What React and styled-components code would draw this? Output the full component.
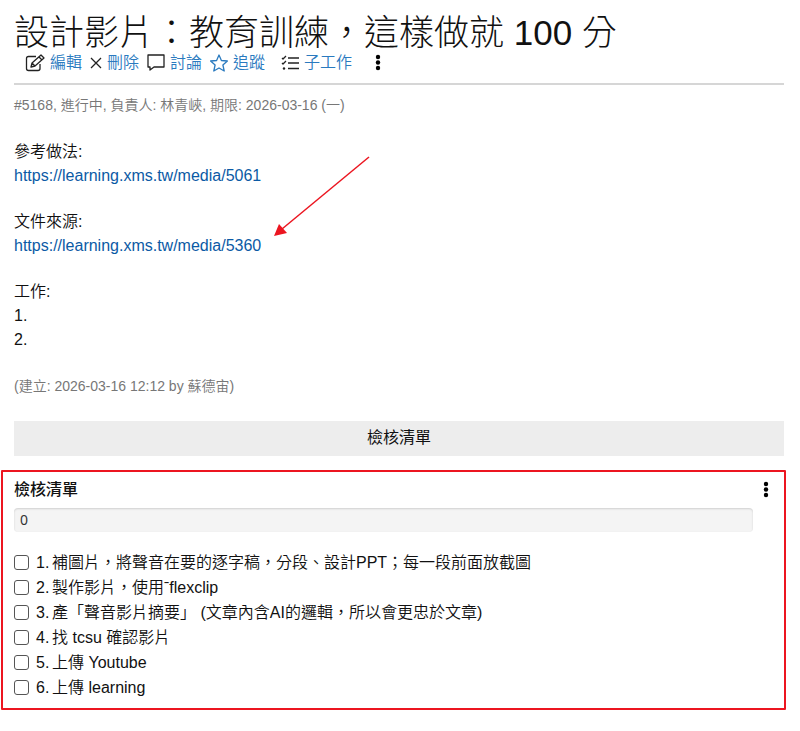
import React, { useState } from "react";
import styled, { createGlobalStyle } from "styled-components";

const GlobalStyle = createGlobalStyle`
  * {
    box-sizing: border-box;
  }

  body {
    margin: 0;
    background: #fff;
    color: #111;
    font-family: "Liberation Sans", "Noto Sans CJK TC", sans-serif;
    font-size: 16px;
    line-height: 24px;
  }

  a {
    color: #0b5aa5;
    text-decoration: none;
  }
`;

// Page
const Page = styled.main`
  padding: 12px 14px 20px 1px;
`;

const Article = styled.article`
  padding: 0 2px 0 13px;
`;

const Title = styled.h1`
  margin: 0;
  font-size: 35px;
  font-weight: 300;
  line-height: 41px;
`;

// Action bar
const Toolbar = styled.nav`
  display: flex;
  align-items: center;
  height: 20px;
  padding-left: 11px;
  gap: 8px;
`;

const Action = styled.a`
  display: flex;
  align-items: center;
  gap: 5px;
  margin-left: ${({ $indent }) => $indent || 0}px;
  color: #2a7abf;
  font-weight: 350;
`;

const Icon = styled.svg`
  width: ${({ $size }) => $size || 20}px;
  height: 20px;
  flex: none;
  fill: none;
  stroke: ${({ $color }) => $color || "#222"};
  stroke-width: 1.3;
  stroke-linejoin: round;
`;

const MenuButton = styled.button`
  display: flex;
  padding: 0;
  margin-left: ${({ $indent }) => $indent || 0}px;
  border: 0;
  background: none;
  cursor: pointer;
`;

const Divider = styled.hr`
  margin: 10px 0;
  border: 0;
  border-top: 2px solid #d6d6d6;
`;

// Task body
const Meta = styled.div`
  color: #777;
  font-size: 14px;
  font-weight: 350;
  line-height: 20px;
`;

const Description = styled.div`
  display: flex;
  flex-direction: column;
  gap: 22px;
  margin: 25px 0 24px;
  font-weight: 350;
`;

const Paragraph = styled.p`
  margin: 0;
`;

const Marked = styled.span`
  position: relative;
`;

const Arrow = styled.svg`
  position: absolute;
  left: 100%;
  bottom: 14px;
  width: 104px;
  height: 84px;
  margin-left: 7px;
`;

const SectionBar = styled.h2`
  margin: 25px 0 14px;
  padding: 5px 0 6px;
  background: #ededed;
  font-size: 16px;
  font-weight: 400;
  text-align: center;
`;

// Checklist
const Checklist = styled.section`
  padding: 6px 14px 8px 11px;
  border: 2px solid #ec1520;
  border-radius: 1px;
`;

const ChecklistHeader = styled.header`
  display: flex;
  align-items: center;
  justify-content: space-between;
`;

const ChecklistTitle = styled.h3`
  margin: 0;
  font-size: 16px;
  font-weight: 500;
`;

const Progress = styled.div`
  margin: 6px 17px 18px 0;
  padding: 0 6px;
  border-radius: 4px;
  background: #f4f4f4;
  box-shadow: inset 0 1px 2px rgba(0, 0, 0, 0.15);
  color: #333;
  font-family: "Noto Sans", sans-serif;
  font-size: 14px;
`;

const Items = styled.ul`
  margin: 0;
  padding: 0;
  list-style: none;
`;

const Item = styled.label`
  display: flex;
  align-items: center;
  height: 25px;
  font-weight: 350;
`;

const Checkbox = styled.input`
  width: 15px;
  height: 15px;
  margin: 0 7px 0 0;
  appearance: none;
  border: 1px solid #555;
  border-radius: 3px;
  background: #fff;

  &:checked {
    background: #2a7abf;
  }
`;

const Number = styled.span`
  width: 16px;
`;

const items = [
  "補圖片，將聲音在要的逐字稿，分段、設計PPT；每一段前面放截圖",
  "製作影片，使用ˉflexclip",
  "產「聲音影片摘要」 (文章內含AI的邏輯，所以會更忠於文章)",
  "找 tcsu 確認影片",
  "上傳 Youtube",
  "上傳 learning",
];

const Kebab = () => (
  <Icon $size={8} viewBox="0 0 8 20">
    <g fill="#000" stroke="none">
      <circle cx="4" cy="4" r="2.2" />
      <circle cx="4" cy="9.5" r="2.2" />
      <circle cx="4" cy="15" r="2.2" />
    </g>
  </Icon>
);

const App = () => {
  const [done, setDone] = useState([]);

  const toggle = (index) => {
    setDone((prev) =>
      prev.includes(index) ? prev.filter((i) => i !== index) : [...prev, index]
    );
  };

  return (
    <>
      <GlobalStyle />
      <Page lang="zh-Hant">
        <Article>
          <Title>設計影片：教育訓練，這樣做就 100 分</Title>
          <Toolbar>
            <Action href="#edit">
              <Icon viewBox="0 0 20 20">
                <path d="M11 3.500H3.500Q1.500 3.500 1.500 5.500v10q0 2 2 2H13q2 0 2-2V11M6 14l1-4 9-8 3 3-9 8zM14 4l3 3M7 10l3 3" />
              </Icon>
              編輯
            </Action>
            <Action href="#delete">
              <Icon $size={12} viewBox="0 0 12 20">
                <path d="M1 5l10 10M11 5L1 15" />
              </Icon>
              刪除
            </Action>
            <Action href="#discuss">
              <Icon $size={18} viewBox="0 0 18 20">
                <path d="M1 2h16v12H7l-4 3v-3H1z" />
              </Icon>
              討論
            </Action>
            <Action href="#follow">
              <Icon $size={18} $color="#2a7abf" viewBox="0 0 18 20">
                <path d="M9 2l2.400 5.500 6 .5-4.500 4 1.300 6L9 15l-5.200 3 1.300-6L.6 8l6-.5z" />
              </Icon>
              追蹤
            </Action>
            <Action href="#subtask" $indent={8}>
              <Icon $size={18} viewBox="0 0 18 20">
                <path d="M7 5h11M7 10h11M7 15.500h11M1 5l1 1 3-3M1 10l1 1 3-3" />
                <circle cx="3" cy="15.500" r="1.200" fill="#222" stroke="none" />
              </Icon>
              子工作
            </Action>
            <MenuButton type="button" aria-label="更多" $indent={14}>
              <Kebab />
            </MenuButton>
          </Toolbar>
          <Divider />
          <Meta>#5168, 進行中, 負責人: 林青峽, 期限: 2026-03-16 (一)</Meta>
          <Description>
            <Paragraph>
              參考做法:
              <br />
              <a href="https://learning.xms.tw/media/5061">
                https://learning.xms.tw/media/5061
              </a>
            </Paragraph>
            <Paragraph>
              文件來源:
              <br />
              <Marked>
                <a href="https://learning.xms.tw/media/5360">
                  https://learning.xms.tw/media/5360
                </a>
                <Arrow viewBox="0 0 104 84" aria-hidden="true">
                  <path d="M101 1L14 73" stroke="#ec1520" strokeWidth="1.5" />
                  <path d="M6 80l5-12 8 9z" fill="#ec1520" />
                </Arrow>
              </Marked>
            </Paragraph>
            <Paragraph>
              工作:
              <br />
              1.
              <br />
              2.
            </Paragraph>
          </Description>
          <Meta>(建立: 2026-03-16 12:12 by 蘇德宙)</Meta>
          <SectionBar>檢核清單</SectionBar>
        </Article>

        <Checklist>
          <ChecklistHeader>
            <ChecklistTitle>檢核清單</ChecklistTitle>
            <MenuButton type="button" aria-label="清單選單">
              <Kebab />
            </MenuButton>
          </ChecklistHeader>
          <Progress>{Math.round((done.length / items.length) * 100)}</Progress>
          <Items>
            {items.map((text, index) => (
              <li key={text}>
                <Item>
                  <Checkbox
                    type="checkbox"
                    checked={done.includes(index)}
                    onChange={() => toggle(index)}
                  />
                  <Number>{index + 1}.</Number>
                  <span>{text}</span>
                </Item>
              </li>
            ))}
          </Items>
        </Checklist>
      </Page>
    </>
  );
};

export default App;
